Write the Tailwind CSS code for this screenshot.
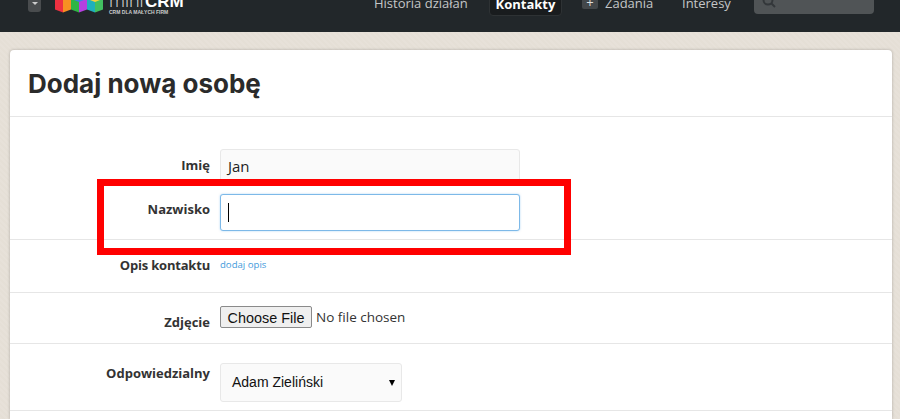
<!DOCTYPE html>
<html lang="en">
<head>
  <meta charset="UTF-8">
  <title>Dodaj nową osobę - miniCRM</title>
  <script src="https://cdn.jsdelivr.net/npm/@tailwindcss/browser@4"></script>
</head>
<body class="bg-[repeating-linear-gradient(45deg,#e7e1d9_0,#e7e1d9_2px,#e5dfd6_2px,#e5dfd6_4px)] h-[419px] overflow-hidden font-['Liberation_Sans',sans-serif] relative">

  <!-- top bar, page is scrolled a little -->
  <div class="bg-[#22272a] h-8 relative overflow-hidden">
    <div class="absolute left-[28px] top-[-5px] w-[13px] h-[17px] rounded-[3px] bg-[#494c4e] flex items-center justify-center">
      <div class="w-0 h-0 border-x-[3px] border-x-transparent border-t-[3px] border-t-[#ccc]"></div>
    </div>
    <svg class="absolute left-[55px] top-0" width="48" height="13" viewBox="0 0 48 13">
      <path d="M0 0h8v12.500l-8-3z" fill="#ee3040"/>
      <path d="M8 0h8v9.500l-8 3z" fill="#f78f22"/>
      <path d="M16 0h8v12.500l-8-3z" fill="#2fb544"/>
      <path d="M24 0h8v9.500l-8 3z" fill="#b53fe0"/>
      <path d="M32 0h8v12.500l-8-3z" fill="#1fb0bc"/>
      <path d="M40 0h8v9.500l-8 3z" fill="#42c060"/>
      <path d="M19 0h10l-5 2z" fill="#3f7fe0"/>
      <path d="M35 0h10l-5 2z" fill="#f2d13c"/>
    </svg>
    <div class="absolute left-[109px] top-[-10px] leading-[20px] flex items-baseline">
      <span class="w-[36px] font-['Open_Sans',sans-serif] font-light text-[18px] text-[#e0e0e0]">mini</span><span class="font-bold text-[17px] text-white">CRM</span>
    </div>
    <div class="absolute left-[109px] top-[9px] text-[#cccccc] text-[5px] leading-[6px] font-bold">CRM DLA MAŁYCH FIRM</div>

    <div class="absolute left-[374px] top-[-7px] flex items-start text-[13px] leading-[20px] text-[#c4c6c7] font-['Open_Sans',sans-serif]">
      <span class="w-[115px]">Historia działań</span>
      <span class="w-[73px] h-[23px] bg-[#191c1e] border border-[#2e3234] rounded-[4px] text-center text-white font-bold">Kontakty</span>
      <span class="ml-[20px] w-[16px] h-[16px] bg-[#43474a] rounded-[2px] text-center text-[13px] leading-[18px] text-[#ddd]">+</span>
      <span class="ml-[7px] w-[77px]">Zadania</span>
      <span>Interesy</span>
    </div>
    <div class="absolute left-[754px] top-[-6px] w-[120px] h-5 bg-[#505456] rounded-[4px]">
      <svg class="ml-2 mt-0" width="14" height="14" viewBox="0 0 14 14" fill="none" stroke="#33373a" stroke-width="2"><circle cx="6" cy="6" r="4.500"/><path d="M9.500 9.500l3.500 3.500"/></svg>
    </div>
  </div>

  <!-- main card -->
  <div class="ml-[10px] mr-[8px] mt-[18px] bg-white rounded-t-[4px] shadow-[0_0_3px_rgba(0,0,0,0.25)] h-[369px] overflow-hidden">
    <div class="h-[67px] border-b border-[#e6e6e6] pl-[18px] pt-[15px]">
      <h1 class="font-['Inter',sans-serif] font-bold text-[26px] leading-[38px] text-[#2b2b2b]">Dodaj nową osobę</h1>
    </div>

    <div class="h-[123px] border-b border-[#e6e6e6] pt-[32px]">
      <div class="flex">
        <label class="w-[200px] text-right pt-[7px] text-[13px] leading-[18px] font-bold text-[#333] font-['Open_Sans',sans-serif]">Imię</label>
        <div class="ml-[10px] w-[300px] h-[36px] bg-[#fafafa] border border-[#e8e8e8] rounded-[3px] px-[7px] pt-[7px] text-[15px] leading-[18px] text-[#222] font-['Open_Sans',sans-serif]">Jan</div>
      </div>
      <div class="flex mt-[9px]">
        <label class="w-[200px] text-right pt-[6px] text-[13px] leading-[18px] font-bold text-[#333] font-['Open_Sans',sans-serif]">Nazwisko</label>
        <div class="ml-[10px] w-[300px] h-[37px] bg-white border border-[#7db9e8] rounded-[3px] shadow-[0_0_2px_rgba(82,168,236,0.5)] pl-[7px] pt-[8px]">
          <div class="w-px h-[19px] bg-black"></div>
        </div>
      </div>
    </div>

    <div class="h-[53px] border-b border-[#e6e6e6] flex">
      <label class="w-[200px] text-right pt-[16px] text-[13px] tracking-[-0.2px] leading-[18px] font-bold text-[#333] font-['Open_Sans',sans-serif]">Opis kontaktu</label>
      <a class="ml-[10px] pt-[18px] text-[9.600px] leading-[14px] text-[#3f9bdc] font-['Open_Sans',sans-serif]">dodaj opis</a>
    </div>

    <div class="h-[51px] border-b border-[#e6e6e6] flex">
      <label class="w-[200px] text-right pt-[20px] text-[13px] leading-[18px] font-bold text-[#333] font-['Open_Sans',sans-serif]">Zdjęcie</label>
      <div class="ml-[10px] pt-[13px] flex items-start">
        <button class="w-[92px] h-[22px] pt-px bg-[#efefef] border border-[#8a8a8a] rounded-[2px] text-[14.400px] leading-[20px] text-[#111] font-['Liberation_Sans',sans-serif]">Choose File</button>
        <span class="ml-[4px] pt-[2px] text-[13.500px] leading-[18px] text-[#333] font-['Open_Sans',sans-serif]">No file chosen</span>
      </div>
    </div>

    <div class="h-[67px] border-b border-[#e6e6e6] flex">
      <label class="w-[200px] text-right pt-[20px] text-[13px] leading-[18px] font-bold text-[#333] font-['Open_Sans',sans-serif]">Odpowiedzialny</label>
      <div class="ml-[10px] mt-[19px] w-[182px] h-[39px] bg-[#fafafa] border border-[#e8e8e8] rounded-[3px] pl-[11px] pr-[6px] flex items-center justify-between text-[14px] text-[#111] font-['Liberation_Sans',sans-serif]">
        <span>Adam Zieliński</span>
        <span class="w-0 h-0 border-x-[3px] border-x-transparent border-t-[6px] border-t-black"></span>
      </div>
    </div>
  </div>

  <!-- red highlight over the surname field -->
  <div class="absolute left-[97px] top-[179px] w-[474px] h-[76px] border-[7px] border-[#ff0000]"></div>
</body>
</html>
